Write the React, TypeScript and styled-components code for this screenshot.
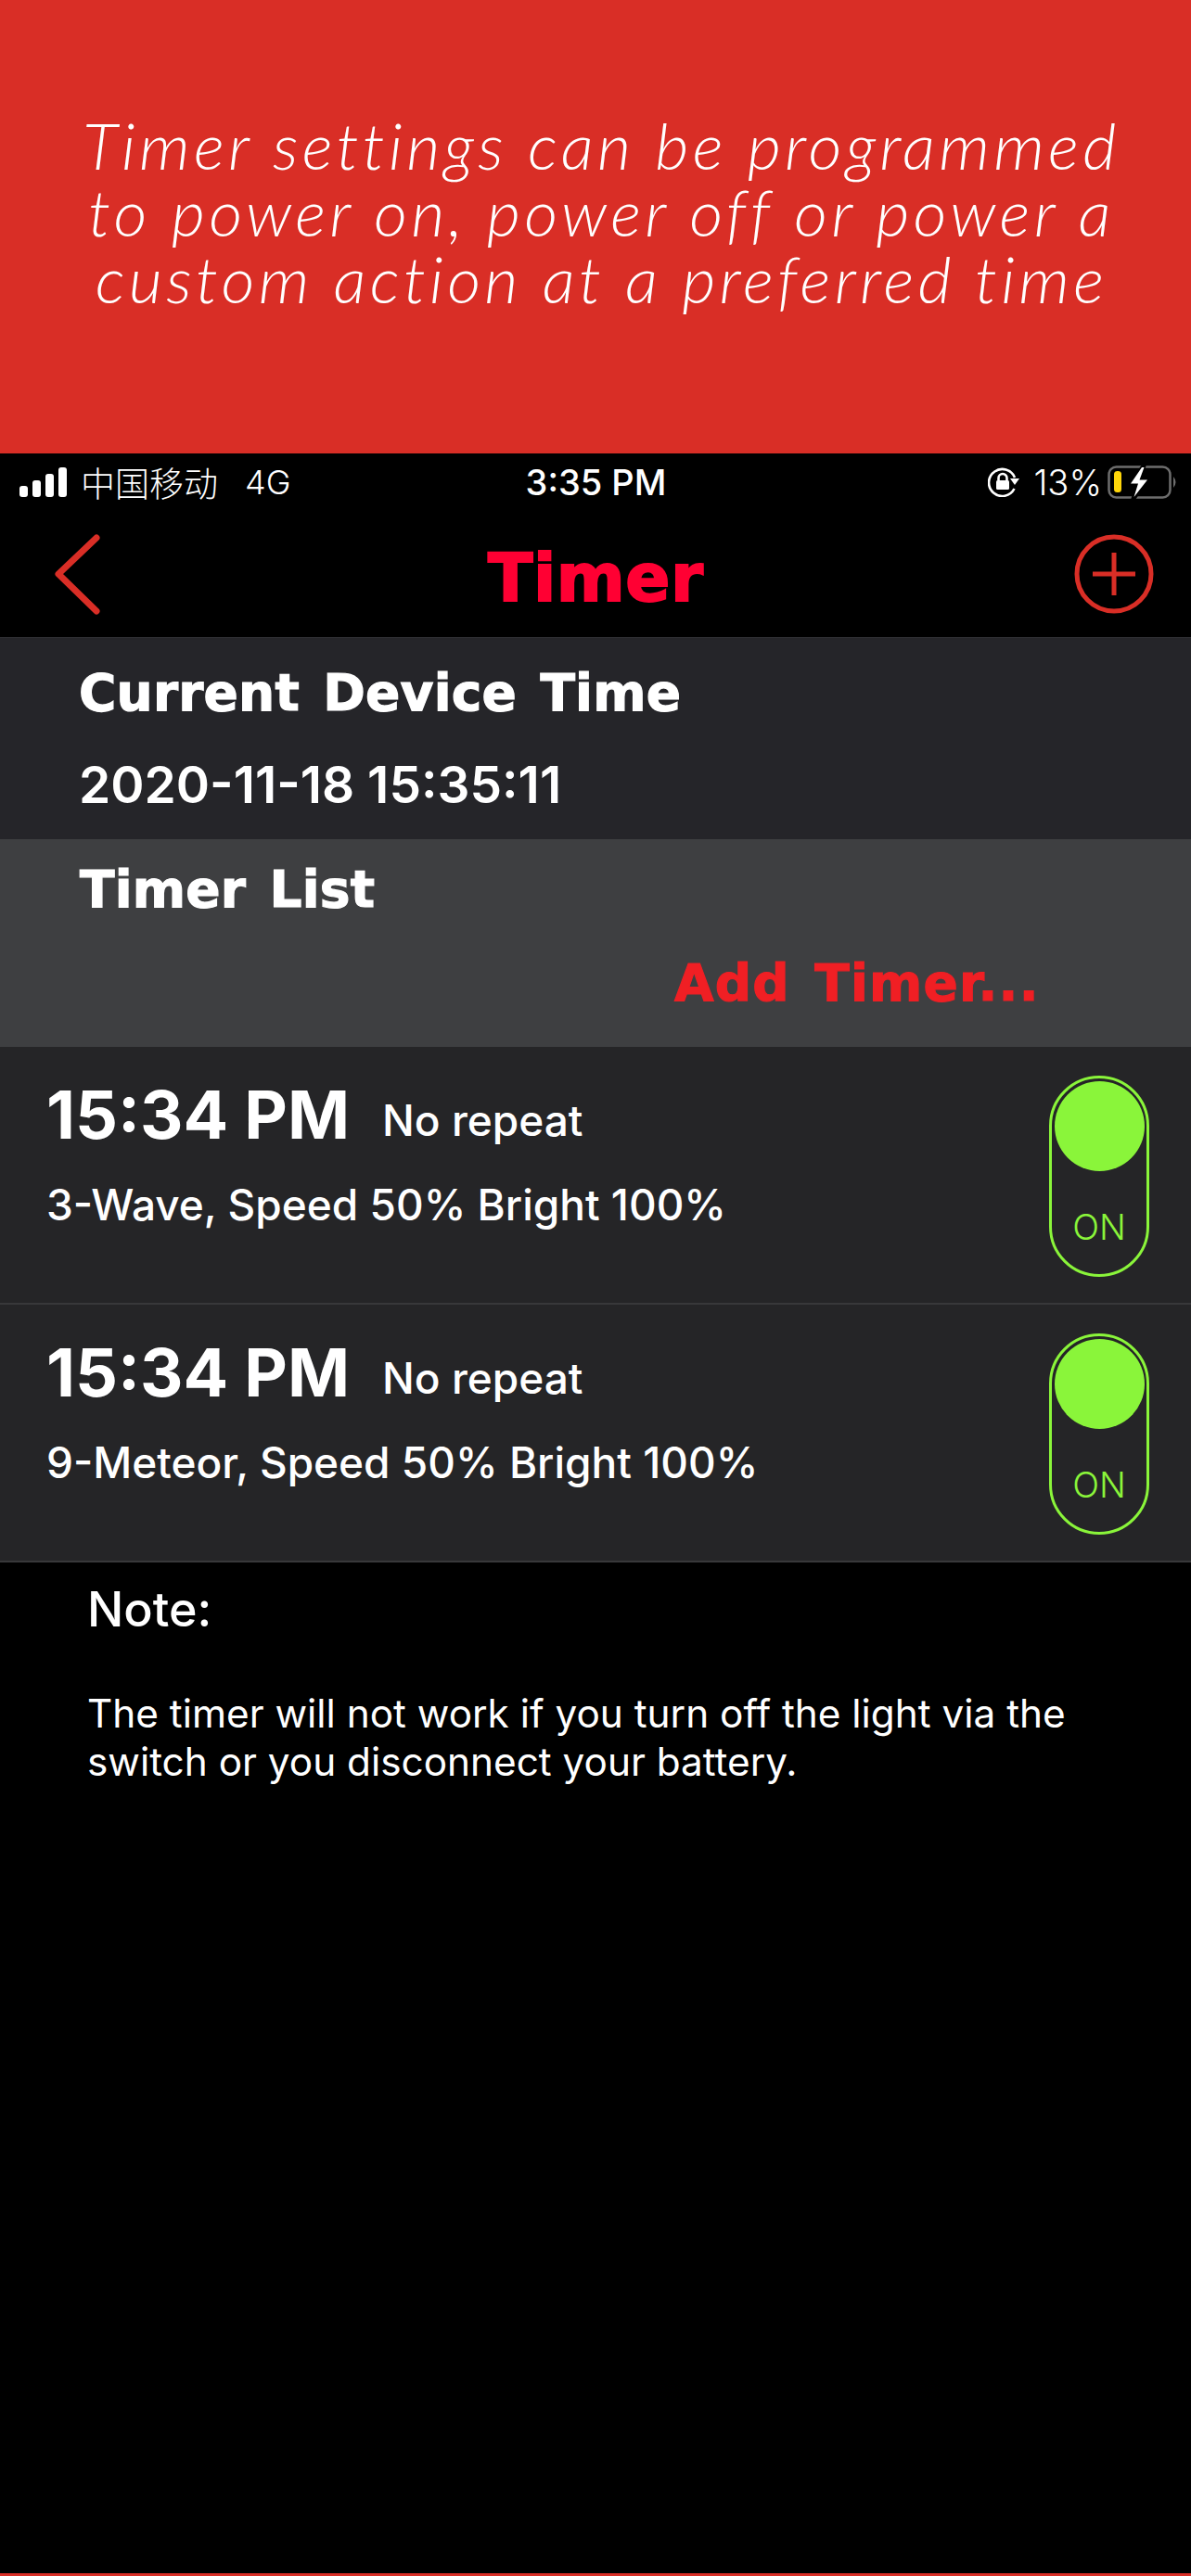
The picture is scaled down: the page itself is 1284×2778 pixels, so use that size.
import React from "react";
import styled, { createGlobalStyle } from "styled-components";

const GlobalStyle = createGlobalStyle`
  html, body {
    margin: 0;
    padding: 0;
    background: #000;
  }
`;

const timers = [
  { time: "15:34 PM", repeat: "No repeat", detail: "3-Wave, Speed 50% Bright 100%" },
  { time: "15:34 PM", repeat: "No repeat", detail: "9-Meteor, Speed 50% Bright 100%" },
];

const Page = styled.div`
  width: 1284px;
  height: 2778px;
  display: flex;
  flex-direction: column;
  background: #000;
  overflow: hidden;
`;
const Banner = styled.div`
  height: 489px;
  box-sizing: border-box;
  padding: 120px 0 0 13px;
  background: #d92e26;
  color: #fff;
  text-align: center;
  font-family: "Lato", sans-serif;
  font-weight: 300;
  font-style: italic;
  font-size: 70px;
  line-height: 72px;
  letter-spacing: 4.3px;
  white-space: nowrap;
`;
const StatusBar = styled.div`
  height: 62px;
  box-sizing: border-box;
  padding: 0 14px 0 20px;
  display: grid;
  grid-template-columns: 1fr auto 1fr;
  align-items: center;
  color: #fff;
  font-family: "Inter", "Noto Sans CJK SC", sans-serif;
`;
const Carrier = styled.div`
  display: flex;
  align-items: center;
  gap: 13px;
  font-size: 37px;
  font-weight: 300;
`;
const CarrierNet = styled.span`
  margin-left: 16px;
  font-size: 36px;
`;
const Clock = styled.div`
  font-size: 38px;
  font-weight: 500;
  margin-right: 5px;
`;
const StatusRight = styled.div`
  display: flex;
  align-items: center;
  justify-content: flex-end;
  gap: 6px;
  font-size: 38px;
  font-weight: 300;
`;
const LockSlot = styled.span`
  display: flex;
  margin-right: 9px;
`;
const NavBar = styled.div`
  height: 136px;
  box-sizing: border-box;
  padding: 0 40px 0 54px;
  display: flex;
  align-items: center;
  justify-content: space-between;
  position: relative;
`;
const NavTitle = styled.div`
  position: absolute;
  left: 526px;
  top: 33px;
  color: #ff0033;
  font-family: "DejaVu Sans", sans-serif;
  font-weight: 700;
  font-size: 71px;
  line-height: 80px;
  letter-spacing: 0.5px;
  -webkit-text-stroke: 2px #ff0033;
`;
const DevicePanel = styled.div`
  height: 218px;
  box-sizing: border-box;
  padding: 28px 0 0 85px;
  background: #252529;
  border-top: 1px solid #2e2e32;
  color: #fff;
`;
const Heading = styled.div`
  font-family: "DejaVu Sans", sans-serif;
  font-weight: 700;
  font-size: 55px;
  line-height: 62px;
  letter-spacing: 0.2px;
  word-spacing: 6px;
  -webkit-text-stroke: 1.2px #fff;
`;
const DeviceTime = styled.div`
  margin-top: 37px;
  font-family: "Inter", sans-serif;
  font-weight: 600;
  font-size: 55px;
  line-height: 62px;
`;
const ListPanel = styled.div`
  height: 224px;
  box-sizing: border-box;
  padding: 23px 0 0 86px;
  background: #3e3f41;
  color: #fff;
  display: flex;
  flex-direction: column;
`;
const AddLink = styled.div`
  margin: 39px 0 0 641px;
  color: #f01f24;
  font-family: "DejaVu Sans", sans-serif;
  font-weight: 700;
  font-size: 55px;
  line-height: 62px;
  letter-spacing: 1.2px;
  word-spacing: 6px;
  white-space: nowrap;
  -webkit-text-stroke: 1.2px #f01f24;
`;
const TimerRow = styled.div`
  height: 278px;
  box-sizing: border-box;
  padding: 33px 45px 0 50px;
  display: flex;
  justify-content: space-between;
  background: #252527;
  border-bottom: 2px solid #38383a;
  color: #fff;
  font-family: "Inter", sans-serif;
`;
const TimerLine = styled.div`
  display: flex;
  align-items: flex-start;
  gap: 35px;
`;
const TimerTime = styled.span`
  font-weight: 700;
  font-size: 72px;
  line-height: 80px;
`;
const TimerRepeat = styled.span`
  margin-top: 6px;
  font-weight: 500;
  font-size: 46px;
  line-height: 80px;
`;
const TimerDetail = styled.div`
  margin-top: 24px;
  font-weight: 500;
  font-size: 46px;
  line-height: 54px;
`;
const Toggle = styled.div`
  width: 108px;
  height: 217px;
  margin-top: -2px;
  box-sizing: border-box;
  border: 3px solid #8af53a;
  border-radius: 54px;
  padding: 3px 3px 0;
  display: flex;
  flex-direction: column;
  align-items: center;
  color: #8af53a;
  font-family: "Inter", sans-serif;
`;
const Knob = styled.div`
  width: 97px;
  height: 97px;
  border-radius: 50%;
  background: #8af53a;
`;
const ToggleLabel = styled.div`
  margin-top: 38px;
  font-size: 38px;
  line-height: 44px;
  font-weight: 300;
`;
const Notes = styled.div`
  padding: 22px 70px 0 94px;
  color: #fff;
  font-family: "Inter", sans-serif;
`;
const NoteTitle = styled.div`
  font-weight: 500;
  font-size: 52px;
  line-height: 58px;
`;
const NoteBody = styled.div`
  margin-top: 57px;
  font-size: 42.3px;
  line-height: 52px;
  font-weight: 400;
`;
const BottomLine = styled.div`
  margin-top: auto;
  height: 3px;
  background: #d92e26;
`;

function SignalIcon() {
  return (
    <svg width="54" height="34" viewBox="0 0 54 34" fill="#fff">
      <rect x="1" y="21" width="9" height="12" rx="3" />
      <rect x="15" y="15" width="9" height="18" rx="3" />
      <rect x="29" y="8" width="9" height="25" rx="3" />
      <rect x="43" y="1" width="9" height="32" rx="3" />
    </svg>
  );
}

function LockIcon() {
  return (
    <svg width="34" height="32" viewBox="0 0 34 32" fill="none" stroke="#fff" strokeWidth="2.6">
      <path d="M28.5 23 A14.5 14.5 0 1 1 29 11" />
      <path d="M24 12 H34 L29 19 Z" fill="#fff" stroke="none" />
      <path d="M11.5 14 V11.5 a4.5 4.5 0 0 1 9 0 V14" />
      <rect x="9" y="14" width="14" height="10" rx="1.5" fill="#fff" stroke="none" />
    </svg>
  );
}

function BatteryIcon() {
  return (
    <svg width="76" height="38" viewBox="0 0 76 38" fill="none">
      <rect x="1.5" y="2.5" width="66" height="33" rx="8" stroke="#6d6d6d" strokeWidth="2.5" />
      <rect x="7" y="7" width="8" height="23" rx="3.5" fill="#ffd60a" />
      <path d="M71 13 q5 6 0 12 Z" fill="#6d6d6d" />
      <path d="M37 0 L22 22 H30 L25 38 H30 L46 15 H37 L42 0 Z" fill="#000" />
      <path d="M37 3 L25 20.5 H33 L28.5 35 L43 16.5 H34.5 L39.5 3 Z" fill="#fff" />
    </svg>
  );
}

function BackIcon() {
  return (
    <svg width="56" height="90" viewBox="0 0 56 90" fill="none">
      <path d="M50 6 L9 45 L50 85" stroke="#d92e26" strokeWidth="7" strokeLinecap="round" strokeLinejoin="round" />
    </svg>
  );
}

function AddIcon() {
  return (
    <svg width="86" height="86" viewBox="0 0 86 86" fill="none" stroke="#d92e26">
      <circle cx="43" cy="43" r="40" strokeWidth="5" />
      <path d="M43 20 V66 M20 43 H66" strokeWidth="5" />
    </svg>
  );
}

function App() {
  return (
    <Page>
      <GlobalStyle />
      <Banner>
        Timer settings can be programmed
        <br />
        to power on, power off or power a
        <br />
        custom action at a preferred time
      </Banner>
      <StatusBar>
        <Carrier>
          <SignalIcon />
          中国移动
          <CarrierNet>4G</CarrierNet>
        </Carrier>
        <Clock>3:35 PM</Clock>
        <StatusRight>
          <LockSlot>
            <LockIcon />
          </LockSlot>
          13%
          <BatteryIcon />
        </StatusRight>
      </StatusBar>
      <NavBar>
        <BackIcon />
        <NavTitle>Timer</NavTitle>
        <AddIcon />
      </NavBar>
      <DevicePanel>
        <Heading>Current Device Time</Heading>
        <DeviceTime>2020-11-18 15:35:11</DeviceTime>
      </DevicePanel>
      <ListPanel>
        <Heading>Timer List</Heading>
        <AddLink>Add Timer...</AddLink>
      </ListPanel>
      {timers.map((timer, index) => (
        <TimerRow key={index}>
          <div>
            <TimerLine>
              <TimerTime>{timer.time}</TimerTime>
              <TimerRepeat>{timer.repeat}</TimerRepeat>
            </TimerLine>
            <TimerDetail>{timer.detail}</TimerDetail>
          </div>
          <Toggle>
            <Knob />
            <ToggleLabel>ON</ToggleLabel>
          </Toggle>
        </TimerRow>
      ))}
      <Notes>
        <NoteTitle>Note:</NoteTitle>
        <NoteBody>
          The timer will not work if you turn off the light via the switch or you disconnect your battery.
        </NoteBody>
      </Notes>
      <BottomLine />
    </Page>
  );
}

export default App;
